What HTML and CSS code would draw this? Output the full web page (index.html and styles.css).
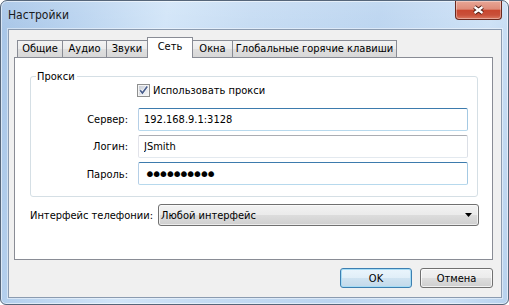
FILE: index.html
```html
<!DOCTYPE html>
<html lang="ru">
<head>
<meta charset="utf-8">
<title>Настройки</title>
<link rel="stylesheet" href="styles.css">
</head>
<body>
<div class="window">
  <div class="titlebar">
    <span class="title">Настройки</span>
    <button class="close" aria-label="Закрыть">
      <svg width="13" height="10" viewBox="0 0 13 10">
        <path d="M2.5 2 L10.5 8 M10.5 2 L2.5 8" stroke="#4a1810" stroke-width="4.2" fill="none"/>
        <path d="M2.5 2 L10.5 8 M10.5 2 L2.5 8" stroke="#ffffff" stroke-width="2.3" fill="none"/>
      </svg>
    </button>
  </div>
  <div class="client">
    <div class="tabs">
      <div class="tab t1">Общие</div>
      <div class="tab t2">Аудио</div>
      <div class="tab t3">Звуки</div>
      <div class="tab t4 active">Сеть</div>
      <div class="tab t5">Окна</div>
      <div class="tab t6">Глобальные горячие клавиши</div>
    </div>
    <div class="panel">
      <fieldset class="group">
        <legend>Прокси</legend>
        <div class="form">
          <label class="check">
            <svg class="cb" width="13" height="13" viewBox="0 0 13 13">
              <defs>
                <linearGradient id="cbg" x1="0" y1="0" x2="1" y2="1">
                  <stop offset="0" stop-color="#c9ced6"/>
                  <stop offset="1" stop-color="#f6f7f8"/>
                </linearGradient>
              </defs>
              <rect x="0.5" y="0.5" width="12" height="12" fill="#f4f4f4" stroke="#8e8f8f"/>
              <rect x="2" y="2" width="9" height="9" fill="url(#cbg)"/>
              <path d="M3.2 6.3 L5.4 9 L10.2 2.6" fill="none" stroke="#ffffff" stroke-width="3"/>
              <path d="M3.2 6.3 L5.4 9 L10.2 2.6" fill="none" stroke="#4a5f8e" stroke-width="1.7"/>
            </svg>
            <span>Использовать прокси</span>
          </label>
          <label class="lbl" for="srv">Сервер:</label>
          <input id="srv" class="tb focus" type="text" value="192.168.9.1:3128">
          <label class="lbl" for="login">Логин:</label>
          <input id="login" class="tb" type="text" value="JSmith">
          <label class="lbl pw-row" for="pw">Пароль:</label>
          <input id="pw" class="tb focus pw pw-row" type="password" value="abcdefghij">
        </div>
      </fieldset>
      <div class="iface">
        <span class="iface-lbl">Интерфейс телефонии:</span>
        <div class="combo">
          <span class="combo-text">Любой интерфейс</span>
          <svg class="arrow" width="7" height="4" viewBox="0 0 7 4"><path d="M0 0 H7 L3.5 4 Z" fill="#000"/></svg>
        </div>
      </div>
    </div>
    <div class="buttons">
      <button class="btn default">OK</button>
      <button class="btn">Отмена</button>
    </div>
  </div>
</div>
</body>
</html>
```
FILE: styles.css
```css
* { box-sizing: border-box; }
html, body { margin: 0; padding: 0; }
body {
  width: 509px;
  height: 305px;
  overflow: hidden;
  background: #ffffff;
  font-family: "DejaVu Sans Condensed", "DejaVu Sans", sans-serif;
  font-stretch: condensed;
  font-size: 11px;
  color: #000;
}
.window {
  width: 509px;
  height: 305px;
  border: 1px solid #56667a;
  border-radius: 7px 7px 6px 6px;
  background:
    linear-gradient(180deg, rgba(255,255,255,0.10) 0, rgba(255,255,255,0) 30px),
    linear-gradient(100deg, #a7c5e7 0%, #b9d3ef 14%, #d2e5f8 30%, #c6dcf3 45%, #bcd5f0 68%, #cde1f6 88%, #b8d2ee 100%);
  box-shadow: inset 0 0 0 1px rgba(255,255,255,0.55);
  padding: 0 6px 6px 7px;
  display: flex;
  flex-direction: column;
}
.titlebar {
  height: 28px;
  display: flex;
  align-items: flex-start;
}
.title {
  margin-top: 6px;
  line-height: 16px;
  font-size: 12px;
  color: #1a1a1a;
}
.close {
  margin-left: auto;
  width: 47px;
  height: 19px;
  padding: 0;
  border: 1px solid #6b281d;
  border-top: 0;
  border-radius: 0 0 4px 4px;
  background: linear-gradient(180deg, #e8a696 0%, #df8c79 45%, #c9472f 52%, #c9503a 78%, #dc7a61 100%);
  box-shadow: inset 0 0 0 1px rgba(255,255,255,0.35);
  display: flex;
  align-items: center;
  justify-content: center;
}
.close svg { display: block; }
.client {
  flex: 1;
  border: 1px solid #8b9bb0;
  box-shadow: 0 0 0 1px rgba(255,255,255,0.45);
  background: #f0f0f0;
  padding: 7px 8px 9px 5px;
  display: flex;
  flex-direction: column;
}
.tabs {
  height: 20px;
  padding-left: 3px;
  display: flex;
  align-items: flex-end;
}
.tab {
  height: 17px;
  margin-left: -1px;
  border: 1px solid #898c95;
  border-bottom: 0;
  background: linear-gradient(180deg, #f3f3f3 0%, #ebebeb 50%, #dfdfdf 50%, #d8d8d8 100%);
  line-height: 16px;
  text-align: center;
  white-space: nowrap;
}
.t1 { width: 46px; margin-left: 0; }
.t2 { width: 45px; }
.t3 { width: 42px; }
.t4 { width: 46px; }
.t5 { width: 41px; }
.t6 { width: 165px; }
.tab.active {
  height: 21px;
  margin-bottom: -1px;
  background: #ffffff;
  line-height: 18px;
  position: relative;
  z-index: 1;
}
.panel {
  flex: 1;
  border: 1px solid #898c95;
  background: #ffffff;
  padding: 12px 13px 0 15px;
  display: flex;
  flex-direction: column;
}
.group {
  margin: 0 1px 0 0;
  padding: 0 9px 10px 0;
  min-width: 0;
  border: 1px solid #d5dfe5;
  border-radius: 3px;
}
.group legend {
  margin-left: 5px;
  padding: 0 2px 0 1px;
  line-height: 13px;
}
.form {
  display: grid;
  grid-template-columns: 97px 1fr;
  column-gap: 10px;
  row-gap: 4px;
}
.check {
  grid-column: 2;
  margin: 1px 0 7px -1px;
  height: 13px;
  display: flex;
  align-items: center;
  gap: 3px;
  line-height: 13px;
}
.cb { display: block; flex: none; }
.lbl {
  text-align: right;
  line-height: 23px;
}
.pw-row { margin-top: 1px; }
.tb {
  height: 23px;
  width: 100%;
  margin: 0;
  padding: 0 5px;
  border: 1px solid;
  border-color: #abadb3 #dbdfe6 #e3e9ef #e2e3ea;
  border-radius: 2px;
  background: #ffffff;
  font: inherit;
  color: #000;
  outline: none;
}
.tb.focus {
  border-color: #3d7bad #a4c9e3 #b7d9ed #b5cfe7;
}
.pw {
  font-family: "DejaVu Sans", sans-serif;
  font-stretch: normal;
  font-size: 20px;
  letter-spacing: -5px;
  padding-left: 5px;
}
.iface {
  margin-top: 7px;
  display: flex;
  align-items: center;
}
.iface-lbl {
  width: 118px;
  margin-right: 10px;
  white-space: nowrap;
}
.combo {
  flex: 1;
  height: 22px;
  border: 1px solid #707070;
  border-radius: 3px;
  background: linear-gradient(180deg, #f2f2f2 0%, #ebebeb 50%, #dddddd 50%, #cfcfcf 100%);
  box-shadow: inset 0 0 0 1px rgba(255,255,255,0.6);
  padding: 0 6px 0 2px;
  display: flex;
  align-items: center;
}
.combo-text { flex: 1; }
.arrow { display: block; }
.buttons {
  margin-top: 8px;
  height: 20px;
  display: flex;
  justify-content: flex-end;
  gap: 8px;
}
.btn {
  width: 73px;
  height: 20px;
  padding: 0;
  border: 1px solid #707070;
  border-radius: 3px;
  background: linear-gradient(180deg, #f2f2f2 0%, #ebebeb 50%, #dddddd 50%, #cfcfcf 100%);
  box-shadow: inset 0 0 0 1px rgba(255,255,255,0.7);
  font: inherit;
  color: #000;
}
.btn.default {
  width: 72px;
  border-color: #3c7fb1;
  box-shadow: inset 0 0 0 1px #a6dcf5;
  background: linear-gradient(180deg, #eaf5fc 0%, #e0eef8 50%, #cfe3f1 50%, #c3d9ea 100%);
}
```
